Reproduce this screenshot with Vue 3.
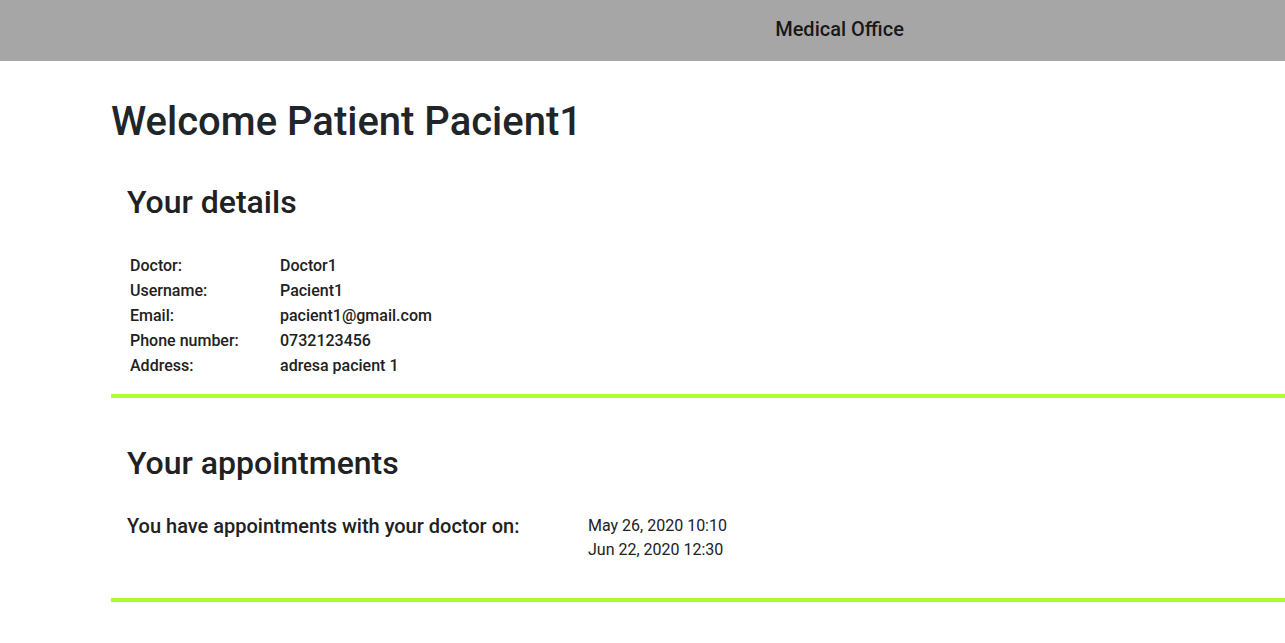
<script setup>
const details = [
  ['Doctor:', 'Doctor1'],
  ['Username:', 'Pacient1'],
  ['Email:', 'pacient1@gmail.com'],
  ['Phone number:', '0732123456'],
  ['Address:', 'adresa pacient 1'],
]
const appointments = ['May 26, 2020 10:10', 'Jun 22, 2020 12:30']
</script>

<template>
  <div class="page">
    <header class="toolbar">
      <span class="brand">Medical Office</span>
    </header>
    <main class="content">
      <h1>Welcome Patient Pacient1</h1>
      <section class="details">
        <h2>Your details</h2>
        <table>
          <tbody>
            <tr v-for="[label, value] in details" :key="label">
              <th scope="row">{{ label }}</th>
              <td>{{ value }}</td>
            </tr>
          </tbody>
        </table>
      </section>
      <section class="appointments">
        <h2>Your appointments</h2>
        <div class="schedule">
          <h3>You have appointments with your doctor on:</h3>
          <ul>
            <li v-for="date in appointments" :key="date">{{ date }}</li>
          </ul>
        </div>
      </section>
    </main>
  </div>
</template>

<style>
body {
  background: #fff;
}
</style>

<style scoped>
.page {
  font-family: Roboto, "Liberation Sans", sans-serif;
  color: #212529;
  overflow-x: hidden;
}
.toolbar {
  display: flex;
  justify-content: center;
  box-sizing: border-box;
  padding: 14px 0 17px 394px;
  background: #a6a6a6;
}
.brand {
  font-size: 20px;
  line-height: 30px;
  font-weight: 500;
  color: rgba(0, 0, 0, 0.87);
}
.content {
  margin-left: 111px;
}
h1,
h2,
h3 {
  margin: 0;
  font-weight: 500;
}
h1 {
  padding-top: 37px;
  font-size: 40px;
  line-height: 48px;
}
section {
  padding-left: 16px;
  border-bottom: 4px solid #adff2f;
  color: #212121;
}
h2 {
  font-size: 32px;
  line-height: 38px;
}
.details {
  padding-top: 37px;
  padding-bottom: 16px;
}
table {
  margin-top: 32px;
  border-collapse: collapse;
  font-size: 16px;
  line-height: 25px;
}
th,
td {
  padding: 0 3px;
  font-weight: 500;
  text-align: left;
}
th {
  width: 144px;
}
.appointments {
  padding-top: 46px;
  padding-bottom: 36px;
}
.schedule {
  display: flex;
  margin-top: 32px;
}
h3 {
  width: 461px;
  font-size: 20px;
  line-height: 24px;
}
ul {
  margin: 0;
  padding: 0;
  list-style: none;
  font-size: 16px;
  font-weight: 400;
  line-height: 24px;
}
</style>
